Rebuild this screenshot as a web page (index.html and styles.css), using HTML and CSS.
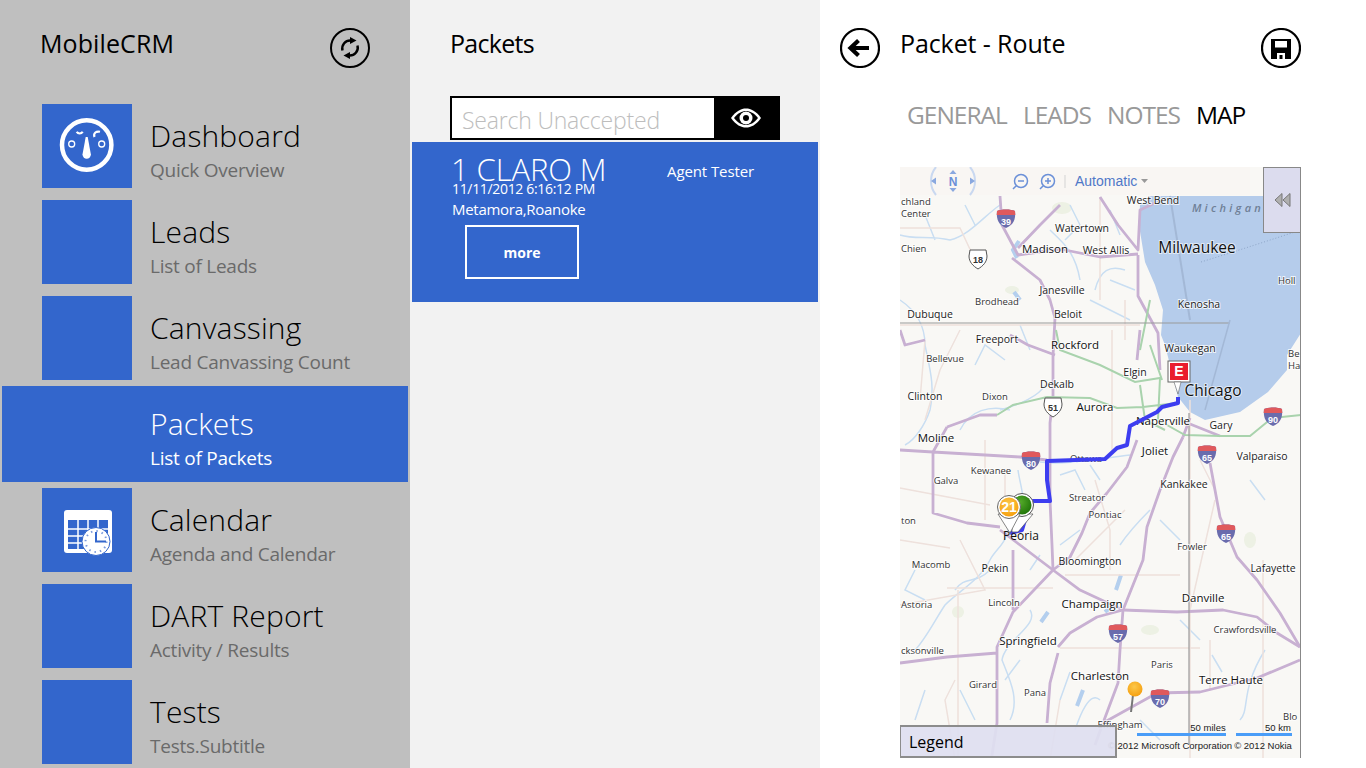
FILE: index.html
```html
<!DOCTYPE html>
<html lang="en">
<head>
<meta charset="utf-8">
<title>MobileCRM</title>
<link rel="stylesheet" href="styles.css">
</head>
<body>
<div class="app">
  <aside class="nav">
    <header class="nav-head">
      <h1 class="page-title crm-title">MobileCRM</h1>
      <button class="round-btn">
        <svg viewBox="0 0 40 40" width="40" height="40"><circle cx="20" cy="20" r="19" class="ring"/><path d="M12.500 22.500A8 8 0 0 1 21 12.500" class="thin"/><path d="M27.500 17.500A8 8 0 0 1 19 27.500" class="thin"/><path d="M20 9l6.500 3.500L20 16z"/><path d="M20 31l-6.500-3.500L20 24z"/></svg>
      </button>
    </header>
    <ul class="menu">
      <li class="item">
        <div class="tile">
          <svg viewBox="0 0 90 84" width="90" height="84"><circle cx="44.700" cy="41" r="24.700" class="w-ring"/><path d="M43.700 33h2l3.200 17.500a4.200 4.200 0 0 1-8.400 0z" fill="#fff"/><circle cx="29.700" cy="40" r="3" class="w-thin"/><circle cx="59.700" cy="40" r="3" class="w-thin"/><path d="M34.700 27.800a3.500 3.500 0 0 0 6 0" class="w-arc"/><path d="M58 27.800C54.500 26.800 51 29 52.500 33" class="w-arc"/></svg>
        </div>
        <div class="text"><div class="title">Dashboard</div><div class="sub">Quick Overview</div></div>
      </li>
      <li class="item">
        <div class="tile"></div>
        <div class="text"><div class="title">Leads</div><div class="sub">List of Leads</div></div>
      </li>
      <li class="item">
        <div class="tile"></div>
        <div class="text"><div class="title">Canvassing</div><div class="sub">Lead Canvassing Count</div></div>
      </li>
      <li class="item selected">
        <div class="tile"></div>
        <div class="text"><div class="title">Packets</div><div class="sub">List of Packets</div></div>
      </li>
      <li class="item">
        <div class="tile">
          <svg viewBox="0 0 90 84" width="90" height="84"><rect x="22" y="22" width="48" height="43" rx="3" fill="#fff"/><path d="M26 32h40v29h-40z" fill="#3366cc"/><path d="M36 32v29M46 32v29M56 32v29M26 41h40M26 48h40M26 55h40" stroke="#fff" stroke-width="1.500"/><circle cx="54" cy="53.500" r="14" fill="#fff" stroke="#3366cc" stroke-width="1"/><circle cx="54" cy="53.500" r="10.500" fill="none" stroke="#7c9bdc" stroke-width="2" stroke-dasharray="1.500 4"/><path d="M54 44v9.500h10" stroke="#3366cc" stroke-width="2" fill="none"/></svg>
        </div>
        <div class="text"><div class="title">Calendar</div><div class="sub">Agenda and Calendar</div></div>
      </li>
      <li class="item">
        <div class="tile"></div>
        <div class="text"><div class="title">DART Report</div><div class="sub">Activity / Results</div></div>
      </li>
      <li class="item">
        <div class="tile"></div>
        <div class="text"><div class="title">Tests</div><div class="sub">Tests.Subtitle</div></div>
      </li>
    </ul>
  </aside>

  <section class="packets">
    <h2 class="page-title packets-title">Packets</h2>
    <div class="search">
      <div class="search-input">Search Unaccepted</div>
      <button class="search-btn">
        <svg viewBox="0 0 30 20" width="30" height="20"><path d="M0 10C5 3 10 .5 15 .5S25 3 30 10C25 17 20 19.500 15 19.500S5 17 0 10z" fill="#fff"/><path d="M3 10C7 5 11 3 15 3s8 2 12 7c-4 5-8 7-12 7s-8-2-12-7z" fill="#000"/><circle cx="15" cy="10" r="6.500" fill="#fff"/><circle cx="15" cy="10" r="3" fill="#000"/></svg>
      </button>
    </div>
    <article class="card">
      <div class="card-top">
        <div class="card-name">1 CLARO M</div>
        <div class="card-agent">Agent Tester</div>
      </div>
      <div class="card-line card-date">11/11/2012 6:16:12 PM</div>
      <div class="card-line card-place">Metamora,Roanoke</div>
      <button class="more">more</button>
    </article>
  </section>

  <section class="detail">
    <header class="detail-head">
      <button class="round-btn">
        <svg viewBox="0 0 40 40" width="40" height="40"><circle cx="20" cy="20" r="19" class="ring2"/><path d="M18.500 12.500L10.500 20L18.500 27.500M11 20H29" class="arrow"/></svg>
      </button>
      <h2 class="page-title detail-title">Packet - Route</h2>
      <button class="round-btn">
        <svg viewBox="0 0 40 40" width="40" height="40"><circle cx="20" cy="20" r="19" class="ring2"/><path fill-rule="evenodd" d="M10 11h20v20h-20zM14 13v6.500h12v-6.500zM16 25v6h8v-6z"/><rect x="18.500" y="27" width="3" height="4"/></svg>
      </button>
    </header>
    <nav class="tabs">
      <span class="tab">GENERAL</span>
      <span class="tab">LEADS</span>
      <span class="tab">NOTES</span>
      <span class="tab active">MAP</span>
    </nav>
    <div class="map">
      <svg class="map-svg" viewBox="900 167 401 591" width="401" height="591">
        <defs>
          <filter id="soft" x="-5%" y="-5%" width="110%" height="110%"><feGaussianBlur stdDeviation="0.45"/></filter>
          <radialGradient id="gold" cx="45%" cy="35%" r="70%"><stop offset="0" stop-color="#fcc84a"/><stop offset="1" stop-color="#f59d0c"/></radialGradient>
          <radialGradient id="leaf" cx="40%" cy="35%" r="70%"><stop offset="0" stop-color="#55ab2a"/><stop offset="1" stop-color="#1f7408"/></radialGradient>
        </defs>
        <rect x="900" y="167" width="401" height="591" fill="#f9f8f5"/>
        <g filter="url(#soft)">
          <path d="M1301 196V333L1287 355V370L1268 392L1240 412L1205 420L1190 412L1178 397L1165 345L1161 335L1163 310L1155 285L1145 262L1139 225L1140 205L1150 196z" fill="#b5cceb"/>
          <g class="blotch">
            <ellipse cx="1062" cy="208" rx="10" ry="6"/><ellipse cx="1012" cy="290" rx="7" ry="4"/><ellipse cx="958" cy="612" rx="6" ry="6"/><ellipse cx="1150" cy="630" rx="9" ry="5"/><ellipse cx="1250" cy="540" rx="6" ry="8"/>
          </g>
          <g class="water">
            <path d="M900 300C915 310 925 325 925 345C930 370 935 385 930 410C925 425 915 440 905 445"/>
            <path d="M1018 470C1020 485 1025 495 1022 510C1020 520 1012 525 1008 530C1005 545 995 550 990 560C980 580 960 590 945 605C935 620 925 640 915 650"/>
            <path d="M1040 462C1065 465 1090 460 1130 455M1060 475L1075 470L1085 490M1090 465L1100 480"/>
            <path d="M1000 205C985 215 970 235 950 240C930 235 915 240 900 235M965 205L975 225M925 215L935 240"/>
            <path d="M1050 230C1060 240 1075 250 1080 280M1095 290C1100 270 1110 265 1125 270M1070 205L1080 225L1065 240M1110 210L1120 235"/>
            <path d="M1000 410C1020 405 1040 395 1045 385M960 430C970 410 990 405 1010 410M975 365L985 345L1005 360M1020 325L1030 350"/>
            <path d="M1030 610C1040 625 1005 640 1002 660C1010 680 1020 700 1010 720M1100 700C1090 690 1080 715 1075 730M1070 672L1060 700"/>
            <path d="M1120 545C1130 530 1140 520 1150 510M1240 720C1250 710 1240 690 1265 650M1212 655L1222 672M1180 620L1200 640"/>
            <path d="M990 570C975 585 965 575 955 590M915 570L905 590L925 600M925 690L915 720M1160 520L1180 540M1250 480L1265 500M1090 300L1130 320M1110 280L1135 290"/>
            <path d="M1005 680L1020 660M960 690L975 720M1140 720L1160 740M1080 530L1060 545M1030 570L1040 555"/>
          </g>
          <g class="water-thick">
            <path d="M1019 241L1013 250L1017 258M1121 575L1116 590M1083 690L1077 706M1041 622L1048 612M1014 292L1020 300M1105 612L1112 606"/>
          </g>
          <g class="minor">
            <path d="M900 228H960L975 260M900 325H1140M960 330L940 370L925 420M1112 330V450M1190 400V770M1005 470V525M900 488L990 505M960 540L985 590L900 605M958 590V770M1095 480L1110 530V570M1065 575H1180M955 680L945 700L955 760M1060 648H1200M1263 560V768M1125 510L1075 560M1215 500L1190 610M947 588H1053M900 540L950 548M1125 300V340M1060 700L1050 760M1200 460L1215 490M1210 640V690M925 340L920 400M985 440V520M1100 197V300"/>
          </g>
          <g class="road">
            <path d="M1000 196L1002 225L1018 255L1060 249L1100 257L1138 254"/>
            <path d="M1018 248L1040 225L1060 205M1012 258L1040 280L1050 300L1055 318L1053 356L1053 397L1050 423L1050 500L1052 545L1053 570"/>
            <path d="M1100 197L1118 225L1138 250L1140 210L1155 203M1138 255L1138 296L1158 333L1160 370"/>
            <path d="M900 450L933 452L1020 457L1047 460M947 427L980 415L997 415M947 427L933 452L933 513L967 523L1000 527"/>
            <path d="M900 330L905 345L925 340M1055 355L1028 345L1010 335"/>
            <path d="M1137 440L1127 467L1107 493L1090 513L1082 533L1070 557L1053 570"/>
            <path d="M1000 530L1020 545L1053 570L1080 590L1123 610"/>
            <path d="M1183 437L1173 457L1160 490L1147 527L1143 560L1123 610L1120 650L1118 683L1103 723L1095 745"/>
            <path d="M1123 610L1177 612L1223 610L1257 617L1277 633L1300 647"/>
            <path d="M1053 570L1013 612L997 647L997 723L990 768M997 653L947 657L900 663M1013 550V610"/>
            <path d="M1123 610L1097 617L1070 633L1058 647M1058 653L1050 683L1047 723"/>
            <path d="M1300 660L1257 678L1200 692L1157 693L1103 723"/>
            <path d="M1210 463L1220 517L1237 557L1257 580L1280 613L1300 647"/>
            <path d="M1190 418L1183 437M1140 330L1137 360M1180 420L1220 436"/>
          </g>
          <g class="green">
            <path d="M1056 330L1060 350L1100 365L1135 382L1160 378L1158 420L1185 435L1220 436L1250 436L1272 418"/>
            <path d="M997 415L1013 405L1047 397L1090 398L1117 408L1143 407L1177 403M1140 350L1150 300M1162 380L1150 345M1272 418L1301 415M1140 385L1145 420L1165 430"/>
          </g>
          <path d="M900 323H1230M1189 413V745" class="border"/>
          <path d="M1230 320L1205 410" class="lake-line"/>
          <path d="M1170 196L1190 320" class="lake-line2"/>
          <path d="M1201 262C1240 250 1270 240 1301 230" class="ferry"/>
        </g>

        <g class="shield" transform="translate(1006 218)"><path d="M-9-7C-5-9 5-9 9-7C10 2 7 7 0 10C-7 7-10 2-9-7z" fill="#6a6cad"/><path d="M-9-7C-5-9 5-9 9-7L9.300-3H-9.300z" fill="#e0595c"/><text y="6.500">39</text></g>
        <g class="shield" transform="translate(1031 460)"><path d="M-9-7C-5-9 5-9 9-7C10 2 7 7 0 10C-7 7-10 2-9-7z" fill="#6a6cad"/><path d="M-9-7C-5-9 5-9 9-7L9.300-3H-9.300z" fill="#e0595c"/><text y="6.500">80</text></g>
        <g class="shield" transform="translate(1207 454)"><path d="M-9-7C-5-9 5-9 9-7C10 2 7 7 0 10C-7 7-10 2-9-7z" fill="#6a6cad"/><path d="M-9-7C-5-9 5-9 9-7L9.300-3H-9.300z" fill="#e0595c"/><text y="6.500">65</text></g>
        <g class="shield" transform="translate(1273 416)"><path d="M-9-7C-5-9 5-9 9-7C10 2 7 7 0 10C-7 7-10 2-9-7z" fill="#6a6cad"/><path d="M-9-7C-5-9 5-9 9-7L9.300-3H-9.300z" fill="#e0595c"/><text y="6.500">90</text></g>
        <g class="shield" transform="translate(1226 533)"><path d="M-9-7C-5-9 5-9 9-7C10 2 7 7 0 10C-7 7-10 2-9-7z" fill="#6a6cad"/><path d="M-9-7C-5-9 5-9 9-7L9.300-3H-9.300z" fill="#e0595c"/><text y="6.500">65</text></g>
        <g class="shield" transform="translate(1118 633)"><path d="M-9-7C-5-9 5-9 9-7C10 2 7 7 0 10C-7 7-10 2-9-7z" fill="#6a6cad"/><path d="M-9-7C-5-9 5-9 9-7L9.300-3H-9.300z" fill="#e0595c"/><text y="6.500">57</text></g>
        <g class="shield" transform="translate(1160 698)"><path d="M-9-7C-5-9 5-9 9-7C10 2 7 7 0 10C-7 7-10 2-9-7z" fill="#6a6cad"/><path d="M-9-7C-5-9 5-9 9-7L9.300-3H-9.300z" fill="#e0595c"/><text y="6.500">70</text></g>
        <g class="shield us" transform="translate(978 259)"><path d="M-8-9H8L9-3C9 3 5 7 0 10C-5 7-9 3-9-3z" fill="#fff" stroke="#555"/><text y="4">18</text></g>
        <g class="shield us" transform="translate(1053 407)"><path d="M-8-9H8L9-3C9 3 5 7 0 10C-5 7-9 3-9-3z" fill="#fff" stroke="#555"/><text y="4">51</text></g>

        <g class="lbl">
          <text x="901" y="205" class="st">chland</text><text x="901" y="217" class="st">Center</text><text x="901" y="252" class="st">Chien</text>
          <text x="1153" y="204">West Bend</text><text x="1082" y="232">Watertown</text><text x="1045" y="253" class="md">Madison</text><text x="1106" y="254">West Allis</text>
          <text x="997" y="305" class="sm">Brodhead</text><text x="1062" y="294">Janesville</text><text x="1199" y="308">Kenosha</text><text x="1278" y="284" class="st">Holl</text>
          <text x="930" y="318">Dubuque</text><text x="1068" y="318">Beloit</text><text x="997" y="343">Freeport</text><text x="1075" y="349" class="md">Rockford</text><text x="1190" y="352">Waukegan</text>
          <text x="945" y="362" class="sm">Bellevue</text><text x="1135" y="376">Elgin</text><text x="1057" y="388">Dekalb</text><text x="925" y="400">Clinton</text><text x="995" y="400" class="sm">Dixon</text>
          <text x="1095" y="411" class="md">Aurora</text><text x="1163" y="425" class="md">Naperville</text><text x="1221" y="429">Gary</text><text x="936" y="442" class="md">Moline</text><text x="1155" y="455" class="md">Joliet</text><text x="1262" y="460">Valparaiso</text><text x="1086" y="462" class="sm">Ottawa</text>
          <text x="991" y="474" class="sm">Kewanee</text><text x="946" y="484" class="sm">Galva</text><text x="1184" y="488">Kankakee</text><text x="1087" y="501" class="sm">Streator</text><text x="1105" y="518" class="sm">Pontiac</text><text x="901" y="524" class="st">ton</text>
          <text x="1192" y="550" class="sm">Fowler</text><text x="931" y="568" class="sm">Macomb</text><text x="995" y="572">Pekin</text><text x="1090" y="565">Bloomington</text><text x="1273" y="572">Lafayette</text>
          <text x="901" y="608" class="st">Astoria</text><text x="1004" y="606" class="sm">Lincoln</text><text x="1092" y="608" class="md">Champaign</text><text x="1203" y="602" class="md">Danville</text><text x="1245" y="633" class="sm">Crawfordsville</text><text x="1028" y="645" class="md">Springfield</text>
          <text x="901" y="654" class="st">cksonville</text><text x="1100" y="680" class="md">Charleston</text><text x="1162" y="668" class="sm">Paris</text><text x="1231" y="684" class="md">Terre Haute</text><text x="983" y="688" class="sm">Girard</text><text x="1035" y="696" class="sm">Pana</text><text x="1120" y="728" class="sm">Effingham</text><text x="1283" y="720" class="st">Blo</text>
          <text x="1288" y="357" class="st">Be</text><text x="1288" y="369" class="st">Ha</text>
        </g>
        <text x="1228" y="212" class="lake-name">Michigan</text>

        <path class="route" d="M1178 397L1178 403L1162 407L1157 412L1130 426L1127 445L1117 448L1105 459L1047 461L1047 480L1050 501L1033 501L1028 510L1022 530L1010 533"/>
        <text x="1021" y="540" class="lbl-peoria">Peoria</text>
        <text x="1213" y="396" class="lbl-chicago">Chicago</text>
        <text x="1197" y="253" class="lbl-chicago">Milwaukee</text>

        <g class="pin"><path d="M1012 532L1012 514H1033L1018 532z" fill="#fff" stroke="#555" stroke-width=".7"/><circle cx="1022" cy="505" r="11.500" fill="#fff" stroke="#555"/><circle cx="1022" cy="505" r="9.500" fill="url(#leaf)"/></g>
        <g class="pin"><path d="M1010 533L998 514H1020z" fill="#fff" stroke="#555" stroke-width=".7"/><circle cx="1009" cy="507" r="11.500" fill="#fff" stroke="#666"/><circle cx="1009" cy="507" r="9.500" fill="url(#gold)"/><text x="1009" y="512" class="pin-num">21</text></g>
        <rect x="1168" y="361" width="22" height="21" fill="#fff" stroke="#666"/><rect x="1170" y="363" width="18" height="17" fill="#ea1c2c"/>
        <path d="M1174 382H1181L1178 394z" fill="#fff" stroke="#666" stroke-width=".6"/>
        <text x="1179" y="376" class="pin-num">E</text>
        <path d="M1133 695L1131 712" stroke="#777" stroke-width="2"/>
        <circle cx="1135" cy="689" r="7.500" fill="url(#gold)"/>

        <rect x="900" y="167" width="350" height="28" fill="#f9f6f3"/>
        <path d="M936 167A22 22 0 0 0 936 195M970 167A22 22 0 0 1 970 195" class="compass"/>
        <path d="M953 170l-3.500 4h7zM953 192l-3.500-4h7zM931 181l5-3.500v7zM975 181l-5-3.500v7z" fill="#8aa8df"/>
        <text x="953" y="186" class="compass-n">N</text>
        <g class="zoom"><circle cx="1021" cy="181" r="6.500"/><path d="M1016 186l-3 3M1018 181h6"/><circle cx="1048" cy="181" r="6.500"/><path d="M1043 186l-3 3M1045 181h6M1048 178v6"/></g>
        <path d="M1065 175V188" stroke="#d3d3d3"/>
        <text x="1075" y="186" class="auto">Automatic</text>
        <path d="M1141 179h7l-3.500 4z" fill="#999"/>

        <text x="1208" y="731" class="scale">50 miles</text><text x="1278" y="731" class="scale">50 km</text>
        <rect x="1137" y="733" width="89" height="3" fill="#4a9df8"/><rect x="1236" y="733" width="56" height="3" fill="#4a9df8"/>
        <text x="1170" y="749" class="copy">© 2012 Microsoft Corporation</text><text x="1263" y="749" class="copy">© 2012 Nokia</text>
        <path d="M1300.500 167V758" stroke="#888"/>
      </svg>
      <div class="collapse">
        <svg viewBox="0 0 17 14" width="17" height="14"><path d="M8 .5L1 7l7 6.500zM16 .5L9 7l7 6.500z" fill="#b0b0b0" stroke="#777"/></svg>
      </div>
      <div class="legend">Legend</div>
    </div>
  </section>
</div>
</body>
</html>
```
FILE: styles.css
```css
* { box-sizing: border-box; }
html, body { margin: 0; padding: 0; height: 100%; overflow: hidden; }
body { font-family: "Open Sans", "Noto Sans", sans-serif; color: #000; background: #fff; }
button { font: inherit; border: 0; padding: 0; background: none; color: inherit; display: block; }
h1, h2, ul { margin: 0; padding: 0; list-style: none; font-weight: 400; }

.app { display: flex; width: 1366px; height: 768px; overflow: hidden; }

.page-title { font-size: 25px; line-height: 30px; font-weight: 400; }
.crm-title { letter-spacing: .1px; }

.round-btn { width: 40px; height: 40px; }
.round-btn svg { display: block; }
.ring { fill: none; stroke: #000; stroke-width: 2; }
.ring2 { fill: none; stroke: #000; stroke-width: 2.200; }
.thin { fill: none; stroke: #000; stroke-width: 2.400; }
.arrow { fill: none; stroke: #000; stroke-width: 4.200; }

/* nav */
.nav { width: 410px; flex: none; background: #bfbfbf; }
.nav-head { display: flex; justify-content: space-between; padding: 28px 40px 0; height: 98px; }
.menu { display: flex; flex-direction: column; }
.item { display: flex; align-items: stretch; height: 96px; padding: 6px 0 6px 40px; margin-left: 2px; width: 406px; gap: 18px; }
.item.selected { background: #3366cc; color: #fff; padding-top: 2px; padding-bottom: 10px; }
.tile { width: 90px; height: 84px; flex: none; background: #3366cc; }
.tile svg { display: block; }
.w-ring { fill: none; stroke: #fff; stroke-width: 4.500; }
.w-thin { fill: none; stroke: #fff; stroke-width: 1.300; }
.w-arc { fill: none; stroke: #fff; stroke-width: 2.200; }
.text { display: flex; flex-direction: column; padding-top: 11px; }
.title { font-size: 30px; line-height: 42px; font-weight: 300; letter-spacing: .15px; }
.sub { font-size: 19px; line-height: 26px; color: #6a6a6a; font-weight: 400; letter-spacing: -.25px; }
.item.selected .text { padding-top: 15px; }
.item.selected .sub { color: #fff; }

/* packets */
.packets { width: 410px; flex: none; background: #f2f2f2; }
.packets-title { padding: 28px 40px 0; height: 96px; line-height: 30px; letter-spacing: -.7px; }
.search { display: flex; margin-left: 40px; width: 330px; height: 44px; border: 2px solid #000; background: #000; }
.search-input { width: 262px; background: #fff; color: #bdbdbd; font-size: 23px; line-height: 44px; height: 40px; padding-left: 10px; letter-spacing: -.2px; font-weight: 300; overflow: hidden; }
.search-btn { flex: 1; display: flex; align-items: center; justify-content: center; }
.search-btn svg { display: block; }
.card { margin: 2px 2px 0; height: 160px; background: #3366cc; color: #fff; padding: 16px 0 0 39px; }
.card-top { display: flex; height: 21px; }
.card-name { width: 216px; font-size: 31px; line-height: 22px; font-weight: 300; letter-spacing: -.1px; white-space: nowrap; }
.card-agent { font-size: 15px; line-height: 20px; padding-top: 3px; letter-spacing: -.1px; }
.card-line { font-size: 15px; line-height: 20px; padding-left: 1px; }
.card-date { font-size: 14px; line-height: 14px; letter-spacing: -.33px; margin-top: 3px; margin-bottom: 3px; }
.card-place { letter-spacing: -.28px; }
.more { width: 114px; height: 54px; margin: 6px 0 0 14px; border: 2px solid #fff; font-size: 14px; font-weight: 700; color: #fff; text-align: center; }

/* detail */
.detail { flex: 1; background: #fff; }
.detail-head { display: flex; padding: 28px 65px 0 20px; height: 96px; }
.detail-title { flex: 1; padding-left: 20px; letter-spacing: -.1px; }
.tabs { display: flex; gap: 16px; padding-left: 87px; height: 71px; font-size: 24.500px; line-height: 38px; }
.tab { color: #999; letter-spacing: -1px; font-weight: 400; }
.tab.active { color: #000; }
.map { position: relative; width: 401px; height: 591px; margin-left: 80px; overflow: hidden; }
.map-svg { display: block; }
.collapse { position: absolute; right: 0; top: 0; width: 38px; height: 66px; background: #dcdcee; border: 1px solid #888; display: flex; align-items: center; justify-content: center; }
.collapse svg { display: block; }
.legend { position: absolute; left: 0; bottom: 0; width: 217px; height: 33px; background: rgba(223,223,240,.93); border: 2px solid #8c8c8c; border-left-width: 1px; font-size: 16px; line-height: 30px; padding-left: 8px; }

/* map */
.blotch ellipse { fill: #edf1e4; }
.water path { fill: none; stroke: #c9def2; stroke-width: 1.500; }
.water-thick path { fill: none; stroke: #b4cfee; stroke-width: 4; }
.minor path { fill: none; stroke: #eee1dc; stroke-width: 1.500; }
.road path { fill: none; stroke: #c8b0d2; stroke-width: 2.800; stroke-linejoin: round; }
.green path { fill: none; stroke: #a9d3ad; stroke-width: 2; }
.border { fill: none; stroke: #9a9a9a; stroke-width: 1.200; }
.lake-line { fill: none; stroke: #a3b8d6; stroke-width: 1.500; }
.lake-line2 { fill: none; stroke: #a3b8d6; stroke-width: 2; }
.ferry { fill: none; stroke: #8ea6c8; stroke-width: 1; stroke-dasharray: 1 2; }
.shield text { font-family: "Liberation Sans", sans-serif; font-size: 9px; font-weight: 700; fill: #fff; text-anchor: middle; }
.shield.us text { fill: #333; }
.lbl text { font-family: "Open Sans", sans-serif; font-size: 10.500px; fill: #1c1c1c; text-anchor: middle; paint-order: stroke; stroke: rgba(255,255,255,.75); stroke-width: 2px; }
.lbl text.sm { font-size: 9.500px; fill: #333; }
.lbl text.md { font-size: 11.500px; fill: #111; }
.lbl text.st { text-anchor: start; font-size: 9.500px; fill: #333; }
.lbl-peoria { font-family: "Open Sans", sans-serif; font-size: 12px; fill: #111; text-anchor: middle; }
.lbl-chicago { font-family: "Open Sans", sans-serif; font-size: 15.500px; fill: #111; text-anchor: middle; paint-order: stroke; stroke: rgba(255,255,255,.6); stroke-width: 2px; }
.lake-name { font-family: "Open Sans", sans-serif; font-size: 11px; font-style: italic; font-weight: 600; letter-spacing: 3.300px; fill: #6f7f96; text-anchor: middle; }
.route { fill: none; stroke: #3d3df0; stroke-width: 4; stroke-linejoin: round; }
.pin-num { font-family: "Liberation Sans", sans-serif; font-size: 14px; font-weight: 700; fill: #fff; text-anchor: middle; }
.compass { fill: none; stroke: #c9d8f0; stroke-width: 2; }
.compass-n { font-family: "Liberation Sans", sans-serif; font-size: 12px; font-weight: 700; fill: #6b90d8; text-anchor: middle; }
.zoom circle, .zoom path { fill: none; stroke: #6b90d8; stroke-width: 1.500; }
.auto { font-family: "Liberation Sans", sans-serif; font-size: 14px; fill: #4f78c8; }
.scale { font-family: "Liberation Sans", sans-serif; font-size: 9.500px; fill: #222; text-anchor: middle; }
.copy { font-family: "Liberation Sans", sans-serif; font-size: 9.500px; fill: #222; text-anchor: middle; }
```
